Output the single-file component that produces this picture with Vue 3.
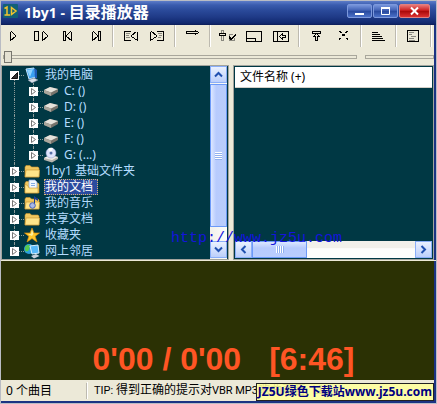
<script setup>
import { ref } from 'vue'

const groups = [
  [
    { label: 'Play', d: 'M4.5 2.5V11.5L9.5 7.5V6.5L5.5 2.5' },
    { label: 'Pause', d: 'M1.5 2.5H5.5V11.5H1.5ZM9.5 2.5V11.5L14.5 7.5V6.5L10.5 2.5' },
    { label: 'Previous', d: 'M3.5 2.5H5.5V11.5H3.5ZM11.5 2.5V11.5L6.5 7.5V6.5L10.5 2.5' },
    { label: 'Next', d: 'M5.5 2.5V11.5L10.5 7.5V6.5L6.5 2.5M11.5 2.5H13.5V11.5H11.5Z' },
  ],
  [
    { label: 'Previous folder', d: 'M9 2.5H2.5V11.5H9M15.5 2.5V11.5L9.5 7.5V6.5L14.5 2.5', g: 'M4 4.5H8M4 6.5H7M4 8.5H8' },
    { label: 'Next folder', d: 'M8 2.5H14.5V11.5H8M1.5 2.5V11.5L7.5 7.5V6.5L2.5 2.5', g: 'M9 4.5H13M10 6.5H13M9 8.5H12' },
  ],
  [{ label: 'Continue', d: 'M2.5 2.5H11.5V1.5L14.5 3.5L11.5 5.5V4.5H2.5Z' }],
  [
    { label: 'Settings', d: 'M0.5 4.5H6.5V6.5H0.5ZM10 7L12 10L17 5M10 8L12 11L17 6', g: 'M2.5 4V1.5H4.5V4M2.5 7V11.5H4.5V7M14 5.5H10.5V11.5H15.5V9' },
    { label: 'Compact view', d: 'M0.5 2.5H15.5V12.5H0.5ZM1 9.5H9.5V12' },
    { label: 'Toggle tree', d: 'M0.5 2.5H15.5V12.5H0.5ZM4.5 3V12M6.5 7.5L9.5 4.5V6.5H12.5V8.5H9.5V10.5Z' },
  ],
  [
    { label: 'Move up', d: 'M4.5 2.5H12.5V4.5H4.5ZM8.5 4.5L5.5 7.5H7.5V11.5H9.5V7.5H11.5Z' },
    { label: 'Delete', d: 'M4 2L13 11M13 2L4 11M5 2L13 10M12 2L4 10', dotted: true },
  ],
  [{ label: 'Sort', d: 'M2 3.5H8M2 5.5H10M2 7.5H12M2 9.5H13M2 11.5H15' }],
  [{ label: 'Properties', d: 'M2.5 1.5H13.5V12.5H2.5Z', g: 'M4 3.5H9M4 5.5H7M6 7.5H11M4 9.5H9M4 11.5H10' }],
]

const tree = [
  { name: '我的电脑', icon: 'pc', open: true },
  { name: 'C: ()', icon: 'drive', child: true },
  { name: 'D: ()', icon: 'drive', child: true },
  { name: 'E: ()', icon: 'drive', child: true },
  { name: 'F: ()', icon: 'drive', child: true },
  { name: 'G: (...)', icon: 'cd', child: true, last: true },
  { name: '1by1 基础文件夹', icon: 'folder' },
  { name: '我的文档', icon: 'docs' },
  { name: '我的音乐', icon: 'music' },
  { name: '共享文档', icon: 'folder' },
  { name: '收藏夹', icon: 'star' },
  { name: '网上邻居', icon: 'net' },
]
const selected = ref('我的文档')
const position = ref(0)
const volume = ref(0)
</script>

<template>
  <main class="window">
    <header class="titlebar">
      <svg class="appicon" viewBox="0 0 15 14" aria-hidden="true">
        <rect width="15" height="14" rx="1" fill="#126078" />
        <path d="M1.500 4.500L4 3V11M1.500 11H7M8.500 3.500L13 7L8.500 10.500Z" fill="none" stroke="#f4c52c" stroke-width="1.500" />
      </svg>
      <h1><span class="latin">1by1 - </span>目录播放器</h1>
      <button class="cap" aria-label="Minimize"><svg viewBox="0 0 11 10"><path d="M1 8H10" stroke="#fff" stroke-width="2" /></svg></button>
      <button class="cap" aria-label="Maximize"><svg viewBox="0 0 11 10"><path d="M1.500 2H9.500V8.500H1.500Z" fill="none" stroke="#fff" /><path d="M1 2H10" stroke="#fff" stroke-width="2" /></svg></button>
      <button class="cap close" aria-label="Close"><svg viewBox="0 0 11 10"><path d="M2 1.500L9 8.500M9 1.500L2 8.500" stroke="#fff" stroke-width="2" /></svg></button>
    </header>

    <div class="toolbar">
      <div v-for="(group, i) in groups" :key="i" class="group">
        <button v-for="b in group" :key="b.label" class="tool" :aria-label="b.label">
          <svg viewBox="0 0 17 13" shape-rendering="crispEdges">
            <path v-if="b.g" :d="b.g" class="grey" />
            <path :d="b.d" :class="{ dotted: b.dotted }" />
          </svg>
        </button>
      </div>
    </div>

    <div class="sliders">
      <input v-model="position" class="seek" type="range" aria-label="Position" />
      <input v-model="volume" class="volume" type="range" aria-label="Volume" />
    </div>

    <div class="panels">
      <section class="panel treepanel">
        <ul class="tree">
          <li v-for="n in tree" :key="n.name" :class="{ child: n.child, last: n.last }">
            <button class="expander" :aria-label="n.open ? 'Collapse' : 'Expand'">
              <svg viewBox="0 0 9 9">
                <path v-if="n.open" d="M7.500 1.500V7.500H1.500Z" fill="#333" stroke="#111" />
                <path v-else d="M2.500 1.500V7.500L6.500 4.500Z" fill="#fff" stroke="#777" />
              </svg>
            </button>
            <i class="dots"></i>
            <svg class="icon" viewBox="0 0 16 16" aria-hidden="true">
              <g v-if="n.icon === 'pc'">
                <path d="M2 2L10 1L12 10L5 12Z" fill="#3aa0f0" stroke="#c4e6ff" />
                <path d="M3 3L9 2L6 10Z" fill="#8fd4ff" />
                <path d="M10 1L13 3V11L11 11Z" fill="#1c5cb8" />
                <path d="M4 13L10 11L14 13L8 16Z" fill="#d9dfe8" stroke="#7c8ca4" stroke-width=".5" />
              </g>
              <g v-else-if="n.icon === 'drive'">
                <path d="M1 7L7 4L15 6V9L8 13L1 10Z" fill="#77736c" />
                <path d="M1 7L7 4L15 6L8 9.500Z" fill="#e6e3dc" />
                <path d="M1 7L8 9.500V13L1 10Z" fill="#aaa69c" />
              </g>
              <g v-else-if="n.icon === 'cd'">
                <path d="M1 11L7 8L15 10V12L9 15.500L1 13Z" fill="#b8b5ae" />
                <path d="M1 11L7 8L15 10L9 13Z" fill="#f0eee8" />
                <circle cx="8" cy="6" r="5" fill="#dfe4fc" stroke="#8c98c8" stroke-width=".5" />
                <path d="M8 6L5 2A5 5 0 0 1 10 1Z" fill="#fff" />
                <circle cx="8" cy="6" r="1.500" fill="#5870a8" />
              </g>
              <g v-else-if="n.icon === 'star'">
                <path d="M8 1L10 6H15.500L11.200 9.300L13 15L8 11.500L3 15L4.800 9.300L0.500 6H6Z" fill="#ffc82c" stroke="#d88c10" stroke-width=".7" />
                <path d="M8 2.500L9.300 7L8 9L4 7H7Z" fill="#fff0a0" />
              </g>
              <g v-else-if="n.icon === 'net'">
                <circle cx="5" cy="6" r="5" fill="#2ba0e0" />
                <path d="M1 4Q4 0 6 3L5 7Q2 10 1 7Z" fill="#56c850" />
                <path d="M6 3L14 2L15 10L8 11Z" fill="#55b7f8" stroke="#d8efff" />
                <path d="M7 13L12 11L15.500 13L10 15.500Z" fill="#c8d0dd" />
              </g>
              <g v-else>
                <path d="M1 4L2 2.500H6L7.500 4H14L15 5V14H1Z" fill="#f0c860" stroke="#c8922c" stroke-width=".6" />
                <path v-if="n.icon === 'docs'" d="M5 1H11L13 3V12H5Z" fill="#f2f8ff" stroke="#7fa6dc" stroke-width=".7" />
                <path v-if="n.icon === 'docs'" d="M7 4.500H11M7 6.500H11" stroke="#86aee4" />
                <path v-if="n.icon === 'docs'" d="M1 14V5L4 7L5 9H14V14Z" fill="#ffe58a" stroke="#c8922c" stroke-width=".6" />
                <path v-else d="M1 14L2 7H15.500L15 14Z" fill="#ffe58a" stroke="#c8922c" stroke-width=".6" />
                <path v-if="n.icon === 'music'" d="M10 10V1L14 4V6L11 4V11" fill="#183c98" />
                <circle v-if="n.icon === 'music'" cx="8.500" cy="10.500" r="2.800" fill="#a9b8e8" stroke="#4a62b0" />
              </g>
            </svg>
            <a href="#" class="label" :class="{ selected: selected === n.name }" @click.prevent="selected = n.name">{{ n.name }}</a>
          </li>
        </ul>
        <div class="scroll vertical">
          <button class="arrow" aria-label="Scroll up"><svg viewBox="0 0 9 9"><path d="M1 6.500L4.500 3L8 6.500" /></svg></button>
          <div class="thumb"><i class="grip"></i></div>
          <button class="arrow" aria-label="Scroll down"><svg viewBox="0 0 9 9"><path d="M1 2.500L4.500 6L8 2.500" /></svg></button>
        </div>
      </section>

      <section class="panel listpanel">
        <table>
          <thead><tr><th scope="col">文件名称 (+)</th></tr></thead>
        </table>
        <div class="scroll horizontal">
          <button class="arrow" aria-label="Scroll left"><svg viewBox="0 0 9 9"><path d="M6.500 1L3 4.500L6.500 8" /></svg></button>
          <div class="thumb"><i class="grip"></i></div>
          <button class="arrow" aria-label="Scroll right"><svg viewBox="0 0 9 9"><path d="M2.500 1L6 4.500L2.500 8" /></svg></button>
        </div>
      </section>
      <span class="watermark">http://www.jz5u.com</span>
    </div>

    <section class="display">
      <span>0'00 / 0'00</span>
      <span>[6:46]</span>
    </section>

    <footer class="status">
      <span class="count">0 个曲目</span>
      <span class="tip"><span class="small">TIP: </span>得到正确的提示对<span class="small">VBR MP3</span>歌曲声音, LIC</span>
      <span class="badge">JZ5U绿色下载站www.jz5u.com</span>
    </footer>
  </main>
</template>

<style>
body { margin: 0; background: #bfc3cc; }
</style>

<style scoped>
* { box-sizing: border-box; }
button { margin: 0; padding: 0; border: 0; background: none; font: inherit; }
.window {
  display: flex;
  flex-direction: column;
  height: 100vh;
  border: 1px solid #b9bcc4;
  background: #ece9d8;
  font: 12px/16px "Noto Sans", "Noto Sans CJK SC", sans-serif;
  color: #000;
}
.toolbar, .sliders, .panels, .display, .status { border-right: 2px solid #1b3383; }
.titlebar {
  display: flex;
  align-items: center;
  gap: 1px;
  flex: none;
  height: 24px;
  padding: 0 6px 4px 2px;
  background: linear-gradient(#5c7cc8 0, #3a5cae 4px, #2b4b9b 9px, #1f3a87 16px, #11296f 22px, #0c1c58);
}
.appicon { width: 15px; height: 14px; }
h1 {
  flex: 1;
  margin: 0;
  padding-left: 5px;
  font: bold 16px/24px "Noto Sans CJK SC", sans-serif;
  color: #fff;
  white-space: pre;
}
.latin { font: bold 14px/20px "Open Sans", sans-serif; }
.cap {
  display: grid;
  place-items: center;
  width: 25px;
  height: 14px;
  border: 1px solid #7c98dc;
  border-radius: 2px;
  background: linear-gradient(#7896dc, #4060b4 45%, #28489c 50%, #4b70c8);
}
.cap svg { width: 11px; height: 10px; }
.cap.close { width: 31px; border-color: #e08080; background: linear-gradient(#e87878, #cc2020 45%, #a80808 50%, #dc3030); }

.toolbar { display: flex; flex: none; height: 22px; overflow: hidden; }
.group { display: flex; flex: none; }
.group::after { content: ""; width: 2px; margin: 0 3px; background: linear-gradient(90deg, #bdbab0 50%, #fff 50%); }
.tool { display: grid; place-items: center; width: 27px; height: 20px; }
.tool svg { width: 17px; height: 13px; fill: none; stroke: #000; }
.tool .grey { stroke: #8a8980; }
.tool .dotted { stroke-dasharray: 1 1; }

.sliders { display: grid; grid-template-columns: 354px 1fr; gap: 8px; flex: none; height: 18px; padding: 4px 0 2px 2px; }
.sliders input { appearance: none; width: 100%; height: 12px; margin: 0; background: none; }
.sliders input::-webkit-slider-runnable-track { height: 4px; border: 1px solid #a9a79c; background: #ece9d8; }
.sliders input::-webkit-slider-thumb { appearance: none; width: 8px; height: 12px; margin-top: -5px; border: 1px solid #77766e; background: #e4e1d2; }
.sliders .volume::-webkit-slider-thumb { visibility: hidden; }

.panels { position: relative; display: grid; grid-template-columns: 228px 1fr; gap: 4px; flex: none; height: 195px; }
.panel { display: flex; min-width: 0; overflow: hidden; border: 1px solid #a3a49d; background: #003844; }
.treepanel { padding-right: 1px; }
.tree { flex: 1; margin: 0; padding: 1px 0 0 8px; list-style: none; }
.tree li { display: flex; align-items: center; position: relative; height: 16px; }
.tree li::before { content: ""; position: absolute; left: 4px; top: 0; bottom: 0; border-left: 1px dotted #8c9a98; }
.tree li:first-child::before { top: 8px; }
.tree li:last-child::before { bottom: 8px; }
.tree li.child { padding-left: 19px; }
.tree li.child::after { content: ""; position: absolute; left: 23px; top: 0; bottom: 0; border-left: 1px dotted #8c9a98; }
.tree li.child.last::after { bottom: 8px; }
.expander { z-index: 1; width: 9px; height: 9px; background: #fff; }
.expander svg { display: block; width: 9px; height: 9px; }
.dots { width: 5px; border-top: 1px dotted #8c9a98; }
.icon { z-index: 1; width: 16px; height: 16px; }
.label { height: 16px; margin-left: 4px; padding: 0 1px; line-height: 16px; color: #b4dcff; text-decoration: none; white-space: nowrap; }
.label.selected { padding: 0 4px 0 0; border: 1px dotted #d9b573; background: #2b4c9f; color: #fff; line-height: 14px; }

.scroll { display: flex; background: linear-gradient(90deg, #f1f0ea, #fdfdfb); }
.vertical { flex-direction: column; flex: none; width: 17px; padding-bottom: 1px; }
.arrow { display: grid; place-items: center; flex: none; width: 17px; height: 17px; border: 1px solid #8aaef8; background: linear-gradient(#eaf1ff, #bccffb); }
.arrow svg { width: 9px; height: 9px; fill: none; stroke: #2050b0; stroke-width: 2; }
.thumb { display: grid; place-items: center; border: 1px solid #6c9af8; background: linear-gradient(90deg, #dce7ff, #b7cbfd 35%, #b9cdfd); }
.vertical .thumb { flex: 1; margin: 1px 0 14px; }
.grip { width: 7px; height: 8px; background: repeating-linear-gradient(#fff 0 1px, #90b0ee 1px 2px); }
.listpanel { flex-direction: column; justify-content: space-between; padding: 1px; }
table { width: 100%; border-collapse: collapse; background: #fff; }
th { height: 20px; padding: 0 5px; border-bottom: 1px solid #d4d0c8; font-weight: normal; text-align: left; line-height: 18px; }
.horizontal { flex: none; height: 17px; background: linear-gradient(#f1f0ea 40%, #fdfdfb 45%); }
.horizontal .thumb { width: 55px; margin-right: auto; background: linear-gradient(#dce7ff, #b7cbfd 40%, #b9cdfd); }
.horizontal .grip { width: 8px; height: 7px; background: repeating-linear-gradient(90deg, #fff 0 1px, #90b0ee 1px 2px); }
.watermark { position: absolute; left: 170px; top: 165px; font: 15px/18px "Liberation Mono", monospace; color: #1414dc; }

.display {
  display: flex;
  align-items: flex-end;
  justify-content: center;
  gap: 28px;
  flex: 1;
  margin-top: 1px;
  padding: 0 0 1px 12px;
  background: #2b3104;
  color: #ff5524;
  font: bold 32px/40px "Liberation Sans", sans-serif;
}
.status { position: relative; display: flex; align-items: center; flex: none; height: 23px; border-bottom: 2px solid #1b3383; white-space: nowrap; overflow: hidden; }
.count { width: 86px; padding-left: 5px; border-right: 1px solid #bdbab0; }
.tip { padding-left: 6px; border-left: 1px solid #fff; white-space: pre; }
.small { font: 11px/16px Roboto, sans-serif; }
.badge {
  position: absolute;
  right: 0;
  bottom: 0;
  height: 18px;
  padding: 0 1px;
  border: 1px solid #222;
  background: rgba(255, 255, 156, 0.88);
  color: #000080;
  font: bold 12px/16px "Open Sans", "Noto Sans CJK SC", sans-serif;
}
</style>
